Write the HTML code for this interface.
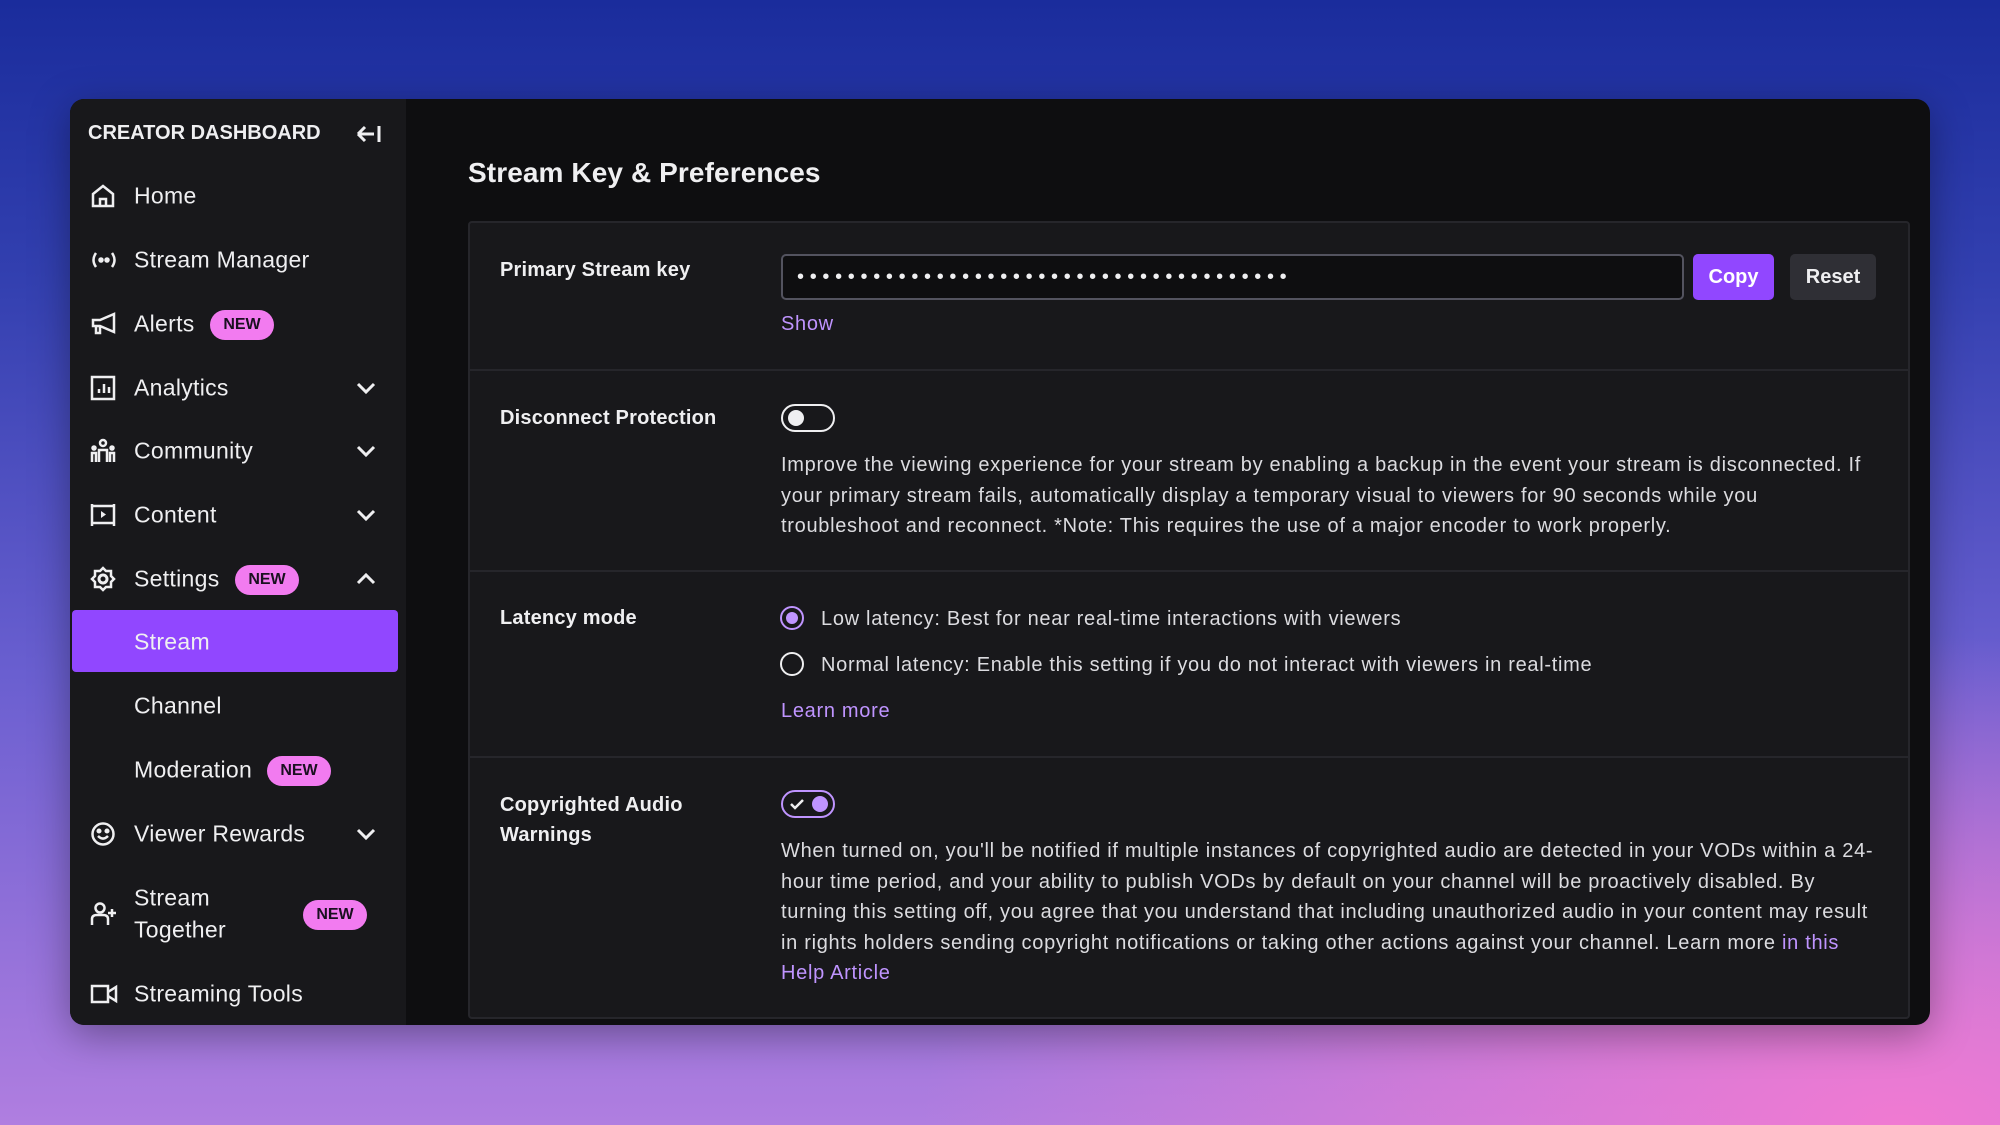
<!DOCTYPE html>
<html><head><meta charset="utf-8"><style>
*{margin:0;padding:0;box-sizing:border-box}
body{width:2000px;height:1125px;overflow:hidden;font-family:"Liberation Sans",sans-serif;
background:radial-gradient(ellipse 1400px 700px at 1900px 1125px,#f07ad2 0%,rgba(240,122,210,0) 70%),linear-gradient(180deg,#1a2c9c 0%,#3340b0 25%,#6a5fd0 60%,#b07ee0 100%);position:relative}
.panel{position:absolute;left:70px;top:99px;width:1860px;height:926px;border-radius:14px;overflow:hidden;background:#0e0e10;box-shadow:0 10px 40px rgba(0,0,0,.35)}
.side{position:absolute;left:0;top:0;width:336px;height:100%;background:#18181b}
.t{position:absolute;color:#efeff1;white-space:nowrap}
.nav{position:absolute;left:64px;font-size:23px;color:#efeff1;transform:translateY(-50%);letter-spacing:0.3px}
.ic{position:absolute;left:20px;transform:translateY(-50%)}
.new{position:absolute;background:#f27bf0;color:#1a1020;font-weight:bold;font-size:16px;border-radius:15px;height:30px;line-height:30px;width:64px;text-align:center;transform:translateY(-50%)}
.chev{position:absolute;left:285px;transform:translateY(-50%)}
.card{position:absolute;left:398px;top:122px;width:1442px;height:798px;border:2px solid #26262b;border-radius:4px;background:#18181b}
.sep{position:absolute;left:398px;width:1442px;height:2px;background:#26262b}
.lbl{position:absolute;left:430px;font-size:20px;font-weight:bold;color:#efeff1;line-height:30px;letter-spacing:0.2px}
.txt{position:absolute;left:711px;font-size:20px;color:#dcdce0;line-height:30.5px;width:1105px;letter-spacing:0.7px}
.link{color:#bf94ff}
</style></head><body>
<div class="panel">
<div class="side">
<div class="t" style="left:18px;top:23px;font-size:20px;font-weight:bold">CREATOR DASHBOARD</div>
<svg style="position:absolute;left:285px;top:24px" width="28" height="22" viewBox="0 0 28 22"><path d="M3 11H19M3 11L10 4M3 11L10 18" stroke="#efeff1" stroke-width="3" fill="none"/><path d="M24 3V19" stroke="#efeff1" stroke-width="3"/></svg>

<svg class="ic" style="top:97px" width="26" height="26" viewBox="0 0 26 26" fill="none" stroke="#efeff1" stroke-width="2.5"><path d="M3 11L13 3L23 11V23H3Z M10 23V16H16V23"/></svg>
<div class="nav" style="top:97px">Home</div>
<svg class="ic" style="top:161px" width="28" height="20" viewBox="0 0 28 20" fill="none" stroke="#efeff1" stroke-width="2.5"><path d="M6 3Q1 10 6 17M22 3Q27 10 22 17"/><circle cx="11" cy="10" r="1.5" fill="#efeff1"/><circle cx="17" cy="10" r="1.5" fill="#efeff1"/></svg>
<div class="nav" style="top:161px">Stream Manager</div>
<svg class="ic" style="top:225px" width="28" height="26" viewBox="0 0 28 26" fill="none" stroke="#efeff1" stroke-width="2.5"><path d="M3 9H10L24 3V21L10 15H3Z M6 15V22H10V15"/></svg>
<div class="nav" style="top:225px">Alerts</div><div class="new" style="left:140px;top:226px">NEW</div>
<svg class="ic" style="top:289px" width="26" height="26" viewBox="0 0 26 26" fill="none" stroke="#efeff1" stroke-width="2.5"><rect x="2" y="2" width="22" height="22"/><path d="M9 18V14M14 18V9M19 18V12"/></svg>
<div class="nav" style="top:289px">Analytics</div>
<svg class="ic" style="top:352px" width="26" height="26" viewBox="0 0 26 26" fill="none" stroke="#efeff1" stroke-width="2.5"><circle cx="13" cy="5" r="3"/><path d="M9 24V12H17V24M2 24V15H6V24M20 24V15H24V24"/><circle cx="4" cy="10" r="1.5" fill="#efeff1"/><circle cx="22" cy="10" r="1.5" fill="#efeff1"/></svg>
<div class="nav" style="top:352px">Community</div>
<svg class="ic" style="top:416px" width="26" height="26" viewBox="0 0 26 26" fill="none" stroke="#efeff1" stroke-width="2.5"><path d="M2 2V24M24 2V24M2 4H24M2 21H24"/><path d="M11 9L16 12.5L11 16Z" fill="#efeff1" stroke="none"/></svg>
<div class="nav" style="top:416px">Content</div>
<svg class="ic" style="top:480px" width="26" height="26" viewBox="0 0 26 26" fill="none" stroke="#efeff1" stroke-width="3"><circle cx="13" cy="13" r="4"/><path d="M13 2L16 5L21 5L21 10L24 13L21 16L21 21L16 21L13 24L10 21L5 21L5 16L2 13L5 10L5 5L10 5Z" stroke-width="2.5"/></svg>
<div class="nav" style="top:480px">Settings</div><div class="new" style="left:165px;top:481px">NEW</div>
<div style="position:absolute;left:2px;top:511px;width:326px;height:62px;background:#9147ff;border-radius:4px"></div>
<div class="nav" style="top:543px">Stream</div>
<div class="nav" style="top:607px">Channel</div>
<div class="nav" style="top:671px">Moderation</div><div class="new" style="left:197px;top:672px">NEW</div>
<svg class="ic" style="top:735px" width="26" height="26" viewBox="0 0 26 26" fill="none" stroke="#efeff1" stroke-width="2.5"><circle cx="13" cy="13" r="10.5"/><path d="M8 15Q13 20 18 15"/><circle cx="9" cy="10" r="1.3" fill="#efeff1"/><circle cx="17" cy="10" r="1.3" fill="#efeff1"/></svg>
<div class="nav" style="top:735px">Viewer Rewards</div>
<svg class="ic" style="top:815px" width="28" height="26" viewBox="0 0 28 26" fill="none" stroke="#efeff1" stroke-width="2.5"><circle cx="10" cy="7" r="4.5"/><path d="M2 24V18Q2 14 7 14H13Q18 14 18 18V24M22 8V16M18 12H26"/></svg>
<div class="nav" style="top:799px">Stream</div><div class="nav" style="top:831px">Together</div><div class="new" style="left:233px;top:816px">NEW</div>
<svg class="ic" style="top:895px" width="28" height="22" viewBox="0 0 28 22" fill="none" stroke="#efeff1" stroke-width="2.5"><rect x="2" y="3" width="16" height="16"/><path d="M18 9L26 4V18L18 13"/></svg>
<div class="nav" style="top:895px">Streaming Tools</div>
<svg class="chev" style="top:289px" width="22" height="14" viewBox="0 0 22 14"><path d="M3 3L11 11L19 3" stroke="#efeff1" stroke-width="3" fill="none"/></svg>
<svg class="chev" style="top:352px" width="22" height="14" viewBox="0 0 22 14"><path d="M3 3L11 11L19 3" stroke="#efeff1" stroke-width="3" fill="none"/></svg>
<svg class="chev" style="top:416px" width="22" height="14" viewBox="0 0 22 14"><path d="M3 3L11 11L19 3" stroke="#efeff1" stroke-width="3" fill="none"/></svg>
<svg class="chev" style="top:480px" width="22" height="14" viewBox="0 0 22 14"><path d="M3 11L11 3L19 11" stroke="#efeff1" stroke-width="3" fill="none"/></svg>
<svg class="chev" style="top:735px" width="22" height="14" viewBox="0 0 22 14"><path d="M3 3L11 11L19 3" stroke="#efeff1" stroke-width="3" fill="none"/></svg>
</div>

<div class="t" style="left:398px;top:58px;font-size:28px;font-weight:bold;letter-spacing:0.1px">Stream Key &amp; Preferences</div>
<div class="card"></div>
<div class="sep" style="top:270px"></div>
<div class="sep" style="top:471px"></div>
<div class="sep" style="top:657px"></div>

<div class="lbl" style="top:156px">Primary Stream key</div>
<div style="position:absolute;left:711px;top:155px;width:903px;height:46px;border:2px solid #53535f;border-radius:5px;background:#0e0e10;color:#efeff1;font-size:20px;line-height:42px;padding-left:14px;letter-spacing:5.7px;overflow:hidden;white-space:nowrap">•••••••••••••••••••••••••••••••••••••••</div>
<div style="position:absolute;left:1623px;top:155px;width:81px;height:46px;background:#9147ff;border-radius:5px;color:#fff;font-weight:bold;font-size:20px;line-height:46px;text-align:center">Copy</div>
<div style="position:absolute;left:1720px;top:155px;width:86px;height:46px;background:#2f2f35;border-radius:5px;color:#efeff1;font-weight:bold;font-size:20px;line-height:46px;text-align:center">Reset</div>
<div class="txt link" style="top:210px">Show</div>

<div class="lbl" style="top:304px">Disconnect Protection</div>
<div style="position:absolute;left:711px;top:305px;width:54px;height:28px;border:2.5px solid #efeff1;border-radius:14px"></div>
<div style="position:absolute;left:718px;top:311px;width:16px;height:16px;border-radius:50%;background:#efeff1"></div>
<div class="txt" style="top:351px">Improve the viewing experience for your stream by enabling a backup in the event your stream is disconnected. If<br>your primary stream fails, automatically display a temporary visual to viewers for 90 seconds while you<br>troubleshoot and reconnect. *Note: This requires the use of a major encoder to work properly.</div>

<div class="lbl" style="top:504px">Latency mode</div>
<div style="position:absolute;left:710px;top:507px;width:24px;height:24px;border:2.5px solid #bf94ff;border-radius:50%"></div>
<div style="position:absolute;left:716px;top:513px;width:12px;height:12px;border-radius:50%;background:#bf94ff"></div>
<div class="txt" style="left:751px;top:505px;width:1060px">Low latency: Best for near real-time interactions with viewers</div>
<div style="position:absolute;left:710px;top:553px;width:24px;height:24px;border:2.5px solid #efeff1;border-radius:50%"></div>
<div class="txt" style="left:751px;top:551px;width:1060px">Normal latency: Enable this setting if you do not interact with viewers in real-time</div>
<div class="txt link" style="top:597px">Learn more</div>

<div class="lbl" style="top:691px">Copyrighted Audio<br>Warnings</div>
<div style="position:absolute;left:711px;top:691px;width:54px;height:28px;border:2.5px solid #bf94ff;border-radius:14px"></div>
<svg style="position:absolute;left:719px;top:698px" width="16" height="14" viewBox="0 0 16 14"><path d="M2 7L6 11L14 3" stroke="#efeff1" stroke-width="2.5" fill="none"/></svg>
<div style="position:absolute;left:742px;top:697px;width:16px;height:16px;border-radius:50%;background:#bf94ff"></div>
<div class="txt" style="top:737px">When turned on, you'll be notified if multiple instances of copyrighted audio are detected in your VODs within a 24-<br>hour time period, and your ability to publish VODs by default on your channel will be proactively disabled. By turning this setting off, you agree that you understand that including unauthorized audio in your content may result in rights holders sending copyright notifications or taking other actions against your channel. Learn more <span class="link">in this Help Article</span></div>
</div>
</body></html>
